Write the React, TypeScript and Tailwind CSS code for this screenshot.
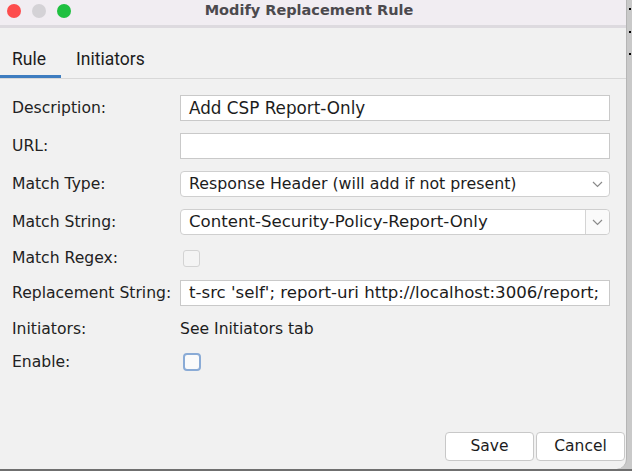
import React from "react";

const font = { fontFamily: '"DejaVu Sans", Verdana, sans-serif' };
const sf = { fontFamily: 'Roboto, "Liberation Sans", sans-serif' };

function Chevron() {
  return (
    <svg width="11" height="7" viewBox="0 0 11 7" fill="none">
      <path d="M1 1 L5.5 5.5 L10 1" stroke="#8a8a8a" strokeWidth="1.2" />
    </svg>
  );
}

function Row({ label, children, className }: { label: string; children?: React.ReactNode; className: string }) {
  return (
    <div className={"flex items-center " + className}>
      <div className="w-[180px] shrink-0 pl-[12px] pt-[2px] text-[15.6px] text-[#222]">{label}</div>
      <div className="flex-1 flex items-center h-full">{children}</div>
    </div>
  );
}

export default function App() {
  return (
    <div className="w-[632px] h-[471px] bg-[#c9c9c9] flex flex-col overflow-hidden" style={font}>
      <div className="flex flex-1">
        <div className="w-[627px] h-[469px] bg-[#f1f1f1] rounded-br-[10px] flex flex-col border-r border-[#b5b5b5]">
          {/* title bar */}
          <div className="h-[28px] shrink-0 bg-[#f1edf2] border-b-[3px] border-[#dddadf] flex items-center relative">
            <div className="flex gap-[11px] pl-[7px] -mt-[4px]">
              <div className="w-[14px] h-[14px] rounded-full bg-[#fd4c4d]" />
              <div className="w-[14px] h-[14px] rounded-full bg-[#d4d2d6]" />
              <div className="w-[14px] h-[14px] rounded-full bg-[#1fc040]" />
            </div>
            <div className="absolute inset-x-0 top-[0px] text-center text-[14.5px] font-bold text-[#4c4a4e] pr-[8px]">Modify Replacement Rule</div>
          </div>
          {/* tabs */}
          <div className="h-[51px] shrink-0 flex items-end border-b border-[#d8d8d8]" style={sf}>
            <div className="w-[61px] h-full flex flex-col justify-end">
              <div className="text-[17.5px] text-[#1c1c1c] pl-[12px] pb-[5px] leading-[22px]">Rule</div>
              <div className="h-[3px] w-[61px] bg-[#3e7dc0]" />
            </div>
            <div className="text-[17.5px] text-[#1c1c1c] pl-[15px] pb-[8px] leading-[22px]">Initiators</div>
          </div>
          {/* form */}
          <div className="flex flex-col pt-[16px] pr-[16px]">
            <Row label="Description:" className="h-[26px]">
              <div className="w-full h-[26px] bg-white border border-[#c9c9c9] text-[16.8px] text-[#1c1c1c] pl-[8px] pt-[1px] flex items-center">Add CSP Report-Only</div>
            </Row>
            <Row label="URL:" className="h-[26px] mt-[12px]">
              <div className="w-full h-[26px] bg-white border border-[#c9c9c9]" />
            </Row>
            <Row label="Match Type:" className="h-[26px] mt-[12px]">
              <div className="w-full h-[26px] bg-white border border-[#cfcfcf] rounded-[4px] text-[15.8px] text-[#1c1c1c] pl-[8px] pr-[6px] flex items-center justify-between">
                <span>Response Header (will add if not present)</span>
                <Chevron />
              </div>
            </Row>
            <Row label="Match String:" className="h-[26px] mt-[12px]">
              <div className="w-full h-[26px] bg-white border border-[#cfcfcf] rounded-[4px] text-[16.6px] text-[#1c1c1c] flex items-center">
                <span className="flex-1 pl-[8px]">Content-Security-Policy-Report-Only</span>
                <div className="w-[24px] h-full border-l border-[#d4d4d4] bg-[#fafafa] rounded-r-[4px] flex items-center justify-center">
                  <Chevron />
                </div>
              </div>
            </Row>
            <Row label="Match Regex:" className="h-[18px] mt-[14px]">
              <div className="ml-[3px] w-[17px] h-[17px] rounded-[3px] border border-[#d3d3d3] bg-[#f4f4f4]" />
            </Row>
            <Row label="Replacement String:" className="h-[26px] mt-[13px]">
              <div className="w-full h-[26px] bg-white border border-[#c9c9c9] text-[16.6px] text-[#1c1c1c] pl-[8px] flex items-center overflow-hidden whitespace-nowrap">t-src 'self'; report-uri http://localhost:3006/report;</div>
            </Row>
            <Row label="Initiators:" className="h-[20px] mt-[13px]">
              <span className="text-[15.6px] text-[#1c1c1c] pt-[2px]">See Initiators tab</span>
            </Row>
            <Row label="Enable:" className="h-[18px] mt-[14px]">
              <div className="ml-[3px] w-[18px] h-[18px] rounded-[4px] border-2 border-[#8aabd6] bg-[#fbfbfb]" />
            </Row>
          </div>
          <div className="flex-1" />
          <div className="flex justify-end gap-[2px] pb-[8px] pr-[1px]">
            <div className="w-[89px] h-[29px] bg-white border border-[#c8c8c8] rounded-[4px] flex items-center justify-center text-[15.5px] text-[#1c1c1c]">Save</div>
            <div className="w-[89px] h-[29px] bg-white border border-[#c8c8c8] rounded-[4px] flex items-center justify-center text-[15.5px] text-[#1c1c1c]">Cancel</div>
          </div>
        </div>
        <div className="flex-1 relative">
          <div className="absolute left-[2px] top-[8px] w-[2px] h-[2px] bg-black" />
          <div className="absolute left-[2px] top-[31px] w-[2px] h-[2px] bg-black" />
          <div className="absolute left-[2px] top-[53px] w-[2px] h-[2px] bg-black" />
        </div>
      </div>
      <div className="h-[2px] bg-[#6f6f6f]" />
    </div>
  );
}
